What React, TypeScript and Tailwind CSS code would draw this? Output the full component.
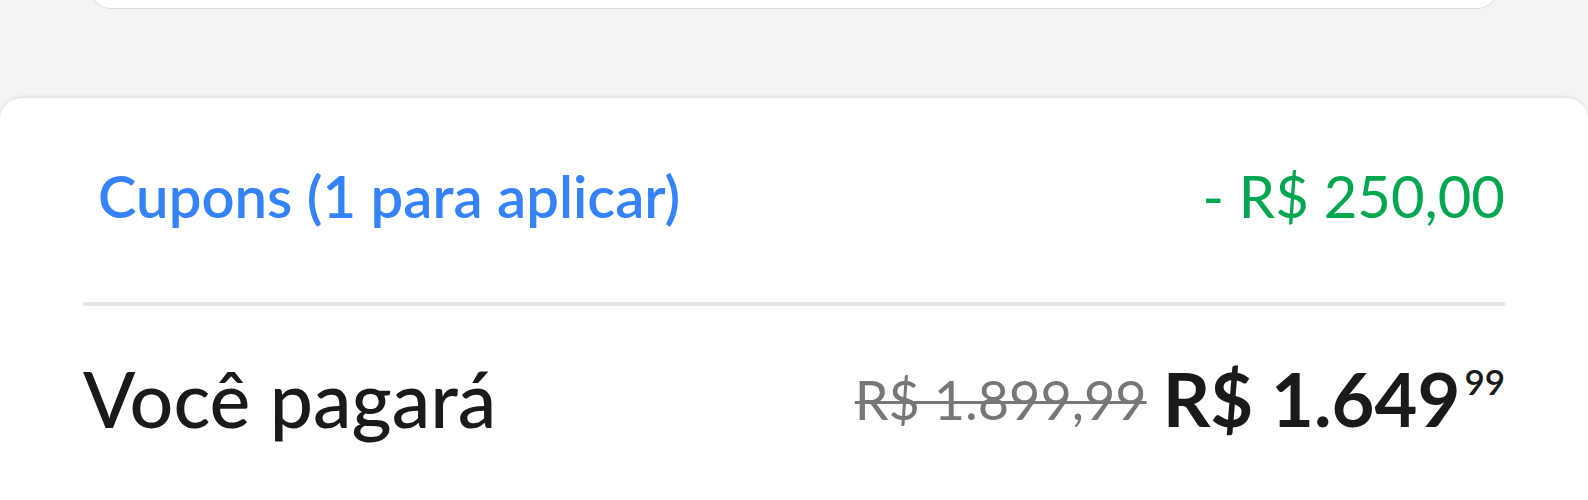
export default function App() {
  return (
    <div className="h-[500px] overflow-hidden bg-[#f4f4f4] font-['Lato',sans-serif]">
      {/* bottom of the card above */}
      <div className="mx-[89px] -mt-[51px] h-[60px] rounded-b-[22px] border border-t-0 border-[#dcdcdc] bg-white" />

      <div className="mt-[88px] h-[420px] rounded-t-[22px] border-t border-[#e6e6e6] bg-white px-[83px] shadow-[0_-1px_3px_rgba(0,0,0,0.06)]">
        <div className="flex h-[204px] items-center justify-between pb-[10px] pl-[15px]">
          <span className="text-[58px] font-semibold text-[#3483fa]">Cupons (1 para aplicar)</span>
          <span className="text-[58px] text-[#00a650]">- R$ 250,00</span>
        </div>
        <div className="h-[4px] bg-[#e6e6e6]" />
        <div className="flex h-[196px] items-center justify-between pb-[10px]">
          <span className="text-[77px] font-medium text-[#1a1a1a]">Você pagará</span>
          <div className="flex items-center gap-[16px]">
            <span className="text-[54px] text-[#777] line-through decoration-[3px]">R$ 1.899,99</span>
            <span className="flex items-start font-bold text-[#1a1a1a]">
              <span className="text-[74px] leading-none">R$ 1.649</span>
              <span className="ml-[4px] mt-[2px] text-[35px] font-semibold leading-none">99</span>
            </span>
          </div>
        </div>
      </div>
    </div>
  );
}
